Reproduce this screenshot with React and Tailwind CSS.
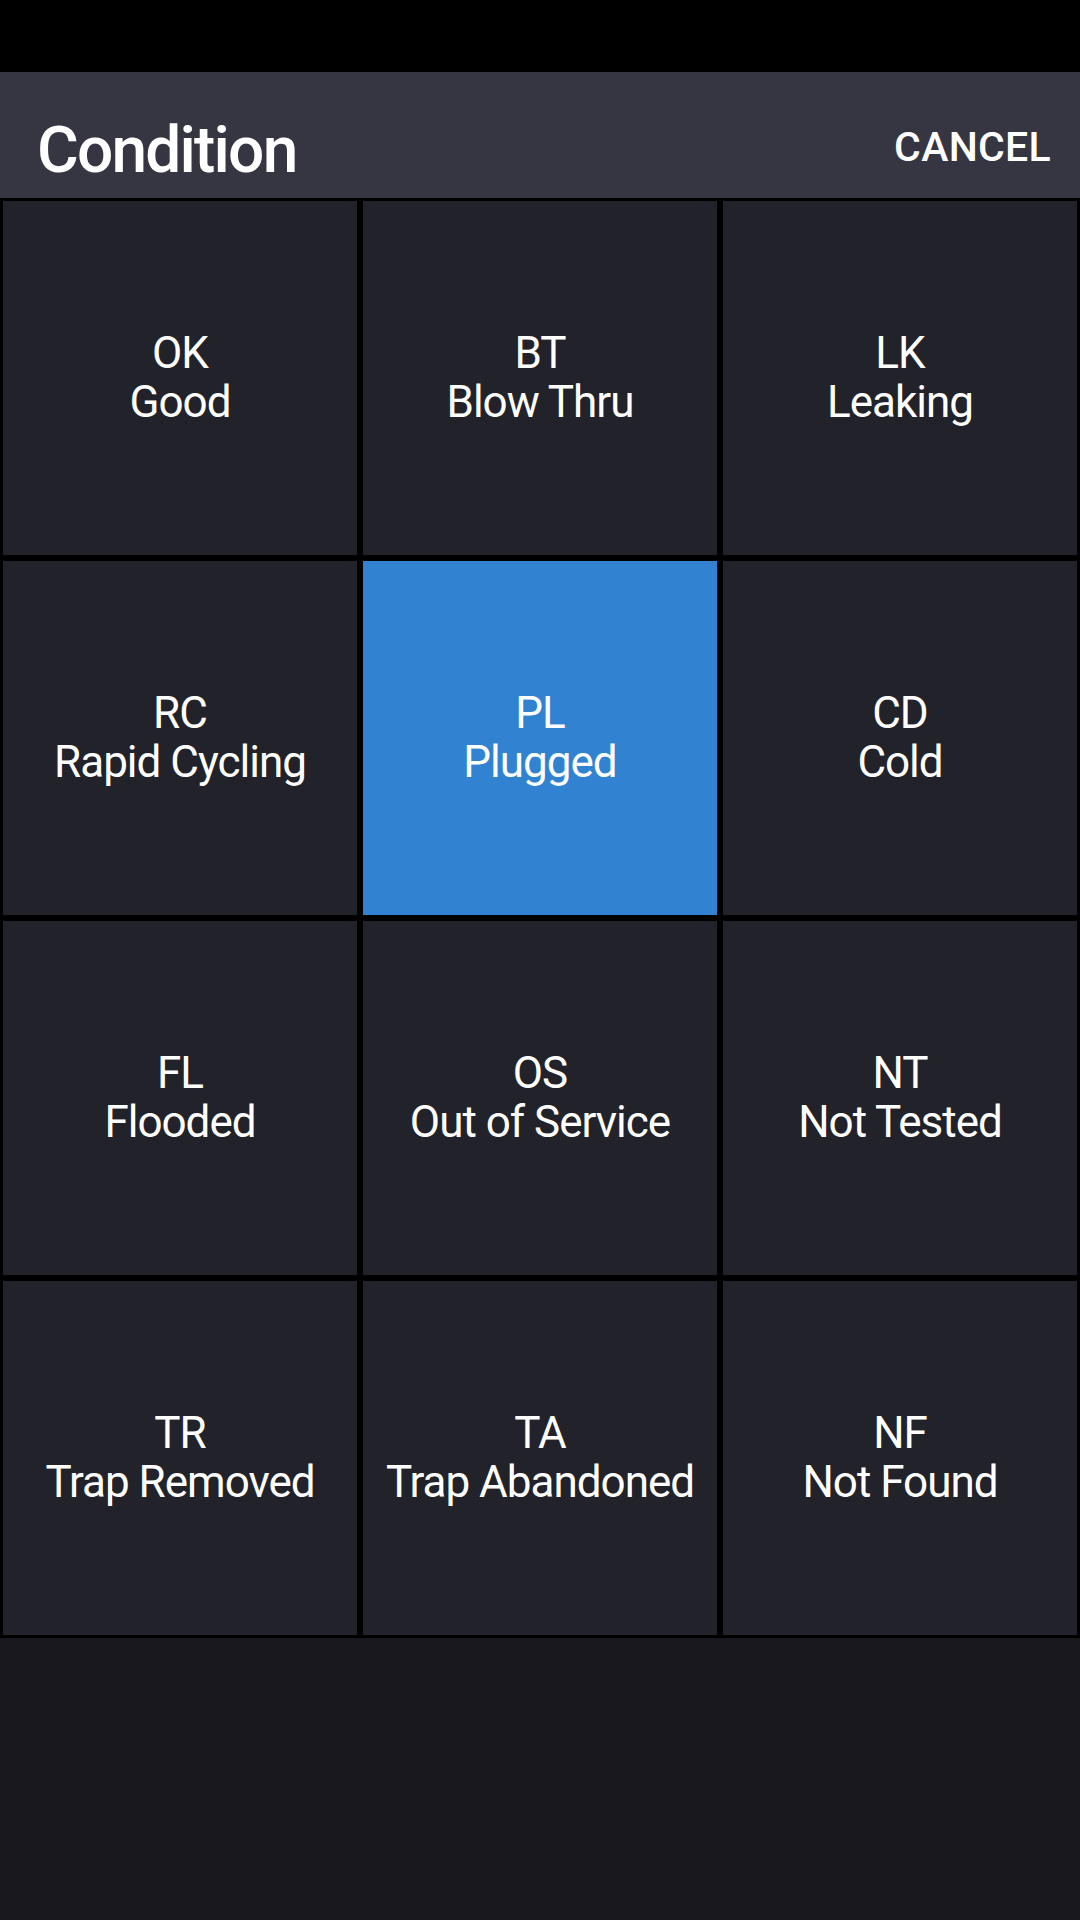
import React from "react";

const items = [
  ["OK", "Good"],
  ["BT", "Blow Thru"],
  ["LK", "Leaking"],
  ["RC", "Rapid Cycling"],
  ["PL", "Plugged"],
  ["CD", "Cold"],
  ["FL", "Flooded"],
  ["OS", "Out of Service"],
  ["NT", "Not Tested"],
  ["TR", "Trap Removed"],
  ["TA", "Trap Abandoned"],
  ["NF", "Not Found"],
];

export default function App() {
  return (
    <div
      className="w-[1080px] h-[1920px] flex flex-col bg-[#19181f] text-white"
      style={{ fontFamily: "Roboto, 'Noto Sans', sans-serif" }}
    >
      <div className="h-[72px] bg-black shrink-0" />
      <div className="h-[126px] shrink-0 bg-[#363642] flex items-start justify-between pl-[37px] pr-[29px]">
        <div className="text-[64px] font-medium leading-none tracking-[-1.8px] mt-[47px]">Condition</div>
        <div className="text-[41px] font-medium leading-none tracking-[0.3px] mt-[55px]">CANCEL</div>
      </div>
      <div className="bg-black p-[3px] grid grid-cols-3 gap-[6px]">
        {items.map(([code, name], i) => (
          <div
            key={code}
            className={
              "h-[354px] flex flex-col items-center justify-center text-[44px] leading-[49px] tracking-[-1px] " +
              (i === 4 ? "bg-[#3282d2]" : "bg-[#22222a]")
            }
          >
            <div>{code}</div>
            <div>{name}</div>
          </div>
        ))}
      </div>
    </div>
  );
}
